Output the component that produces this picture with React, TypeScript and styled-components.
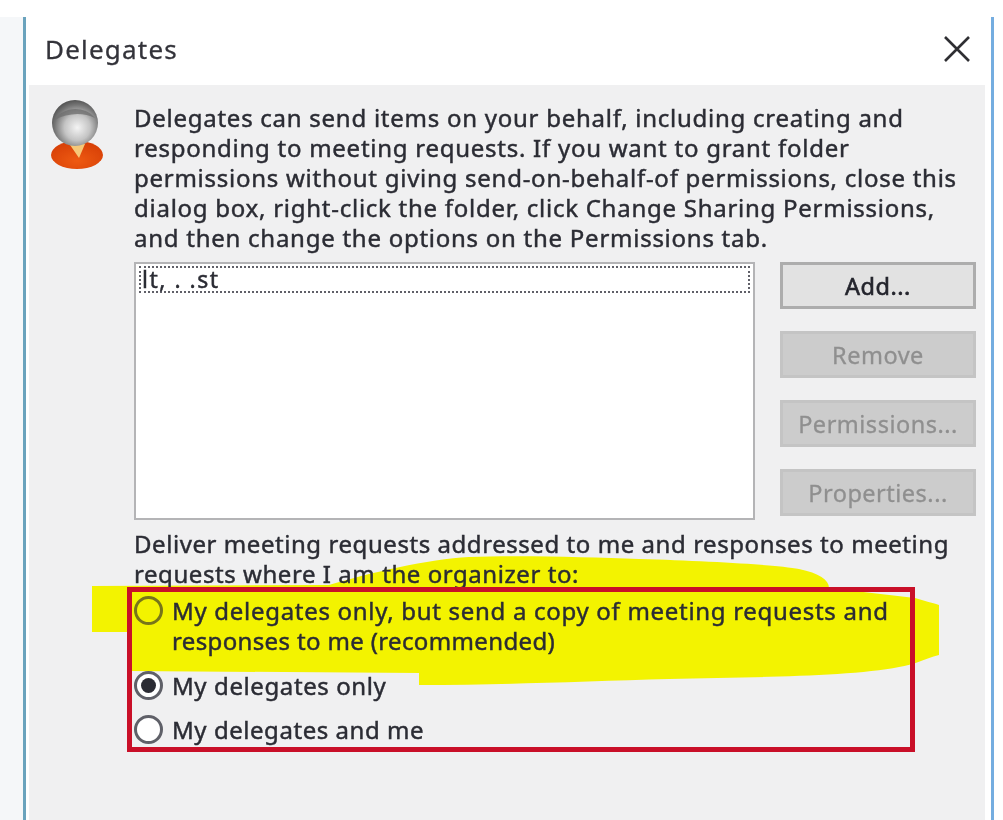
import React from "react";
import styled, { createGlobalStyle } from "styled-components";

const Global = createGlobalStyle`
  html, body { margin: 0; padding: 0; background: #fff; }
  body { font-family: "Noto Sans", "Open Sans", sans-serif; color: #2b2c34; }
  #root { width: 1003px; height: 820px; overflow: hidden; }
`;

const Page = styled.div`
  display: flex;
  align-items: stretch;
  width: 1003px;
  height: 820px;
  padding-top: 17px;
  box-sizing: border-box;
  filter: blur(0.7px);
`;
const Backdrop = styled.div`
  width: 23px;
  background: #f5f7f9;
`;
const Dialog = styled.div`
  width: 971px;
  box-sizing: border-box;
  display: flex;
  flex-direction: column;
  background: #fff;
  border-left: 3px solid #6aa3bd;
  border-right: 3px solid #74ade0;
  padding: 0 6px 0 3px;
`;
const TitleBar = styled.div`
  height: 68px;
  flex: none;
  display: flex;
  align-items: center;
  justify-content: space-between;
  padding: 0 14px 5px 16px;
  box-sizing: border-box;
`;
const Title = styled.div`
  font-size: 26px;
  letter-spacing: 1.2px;
  color: #33333a;
  -webkit-text-stroke: 0.3px currentColor;
`;
const Body = styled.div`
  position: relative;
  flex: 1;
  display: flex;
  background: #f0f0f1;
  padding-top: 18px;
`;
const Highlight = styled.svg`
  position: absolute;
  left: 0;
  top: 0;
  width: 955px;
  height: 735px;
  z-index: 0;
`;
const IconCol = styled.div`
  position: relative;
  z-index: 1;
  width: 105px;
  flex: none;
  padding-left: 22px;
  box-sizing: border-box;
  margin-top: -3px;
`;
const Content = styled.div`
  position: relative;
  z-index: 1;
  display: flex;
  flex-direction: column;
  font-size: 24px;
  line-height: 30px;
  white-space: nowrap;
`;
const Paragraph = styled.div<{ $spacing: number }>`
  letter-spacing: ${(p) => p.$spacing}px;
  -webkit-text-stroke: 0.45px currentColor;
`;
const ListRow = styled.div`
  display: flex;
  gap: 25px;
  margin: 9px 0;
`;
const ListBox = styled.div`
  width: 621px;
  height: 258px;
  box-sizing: border-box;
  background: #fff;
  border: 2px solid #b4b4b6;
  padding: 2px 3px;
`;
const ListItem = styled.div`
  height: 27px;
  line-height: 23px;
  border: 2px dotted #606068;
  box-sizing: border-box;
  padding-left: 1px;
  font-size: 23px;
  letter-spacing: 1.5px;
  -webkit-text-stroke: 0.45px currentColor;
`;
const Buttons = styled.div`
  display: flex;
  flex-direction: column;
  gap: 22px;
`;
const Btn = styled.div<{ $disabled?: boolean }>`
  width: 196px;
  height: 47px;
  box-sizing: border-box;
  display: flex;
  align-items: center;
  justify-content: center;
  font-size: 23.5px;
  letter-spacing: 0.5px;
  background: ${(p) => (p.$disabled ? "#cccccc" : "#e2e2e2")};
  border: 3px solid ${(p) => (p.$disabled ? "#c4c4c4" : "#adadad")};
  color: ${(p) => (p.$disabled ? "#8f8f8f" : "#24252d")};
  -webkit-text-stroke: ${(p) => (p.$disabled ? "0.3px" : "0.6px")} currentColor;
`;
const Option = styled.div<{ $gap: number }>`
  display: flex;
  align-items: flex-start;
  gap: 9px;
  margin-top: ${(p) => p.$gap}px;
  -webkit-text-stroke: 0.45px currentColor;
`;
const OptionLine = styled.div<{ $spacing: number }>`
  letter-spacing: ${(p) => p.$spacing}px;
`;
const Radio = styled.div<{ $on?: boolean; $clear?: boolean }>`
  width: 29px;
  height: 29px;
  flex: none;
  box-sizing: border-box;
  border-radius: 50%;
  border: 3px solid ${(p) => (p.$clear ? "#77751a" : "#5f6068")};
  background: ${(p) => (p.$clear ? "transparent" : "#fff")};
  display: flex;
  align-items: center;
  justify-content: center;
  &::after {
    content: "";
    display: ${(p) => (p.$on ? "block" : "none")};
    width: 15px;
    height: 15px;
    border-radius: 50%;
    background: #2b2c34;
  }
`;
const RedBox = styled.div`
  position: absolute;
  left: 98px;
  top: 502px;
  width: 788px;
  height: 165px;
  box-sizing: border-box;
  border: 5px solid #c90f28;
  z-index: 2;
`;

const PersonIcon = () => (
  <svg width="54" height="72" viewBox="0 0 54 72">
    <defs>
      <radialGradient id="head" cx="0.55" cy="0.6" r="0.62">
        <stop offset="0" stopColor="#f4f4f4" />
        <stop offset="0.45" stopColor="#c4c4c4" />
        <stop offset="0.8" stopColor="#747474" />
        <stop offset="1" stopColor="#4f4f4f" />
      </radialGradient>
      <radialGradient id="shirt" cx="0.5" cy="0.7" r="0.7">
        <stop offset="0" stopColor="#ee5a12" />
        <stop offset="1" stopColor="#d63e06" />
      </radialGradient>
    </defs>
    <ellipse cx="26" cy="55" rx="26" ry="14" fill="url(#shirt)" />
    <path d="M17 42 L28 58 L34 44 Z" fill="#f6c878" />
    <circle cx="24" cy="23" r="23" fill="url(#head)" />
    <path d="M4 20 C10 8 32 4 44 18 C32 12 16 13 4 20 Z" fill="#6e6e6e" opacity="0.75" />
  </svg>
);

const CloseIcon = () => (
  <svg width="28" height="28" viewBox="0 0 28 28" fill="none" stroke="#2f2f33" strokeWidth="2.6">
    <path d="M2 2 L26 26 M26 2 L2 26" />
  </svg>
);

export default function App() {
  return (
    <>
      <Global />
      <Page>
        <Backdrop />
        <Dialog>
          <TitleBar>
            <Title>Delegates</Title>
            <CloseIcon />
          </TitleBar>
          <Body>
            <Highlight viewBox="0 0 955 735">
              <path
                fill="#f3f300"
                d="M63 501 L300 500 C340 488 400 474 440 472 C490 470 560 472 610 474 C680 476 750 480 770 484 C790 488 800 495 800 503 L886 513 C895 516 905 518 910 520 L910 570 C895 574 885 580 870 582 C820 592 720 592 640 594 C560 596 480 600 390 600 L390 588 L100 586 L100 547 L63 547 Z"
              />
            </Highlight>
            <IconCol>
              <PersonIcon />
            </IconCol>
            <Content>
              <Paragraph $spacing={0.74}>
                Delegates can send items on your behalf, including creating and
                <br />
                responding to meeting requests. If you want to grant folder
                <br />
                permissions without giving send-on-behalf-of permissions, close this
                <br />
                dialog box, right-click the folder, click Change Sharing Permissions,
                <br />
                and then change the options on the Permissions tab.
              </Paragraph>
              <ListRow>
                <ListBox>
                  <ListItem>lt, . .st</ListItem>
                </ListBox>
                <Buttons>
                  <Btn>Add...</Btn>
                  <Btn $disabled>Remove</Btn>
                  <Btn $disabled>Permissions...</Btn>
                  <Btn $disabled>Properties...</Btn>
                </Buttons>
              </ListRow>
              <Paragraph $spacing={0.56}>
                Deliver meeting requests addressed to me and responses to meeting
                <br />
                requests where I am the organizer to:
              </Paragraph>
              <Option $gap={7}>
                <Radio $clear />
                <div>
                  <OptionLine $spacing={0.7}>
                    My delegates only, but send a copy of meeting requests and
                  </OptionLine>
                  <OptionLine $spacing={0.36}>responses to me (recommended)</OptionLine>
                </div>
              </Option>
              <Option $gap={15}>
                <Radio $on />
                <OptionLine $spacing={0.6}>My delegates only</OptionLine>
              </Option>
              <Option $gap={14}>
                <Radio />
                <OptionLine $spacing={0.55}>My delegates and me</OptionLine>
              </Option>
            </Content>
            <RedBox />
          </Body>
        </Dialog>
      </Page>
    </>
  );
}
